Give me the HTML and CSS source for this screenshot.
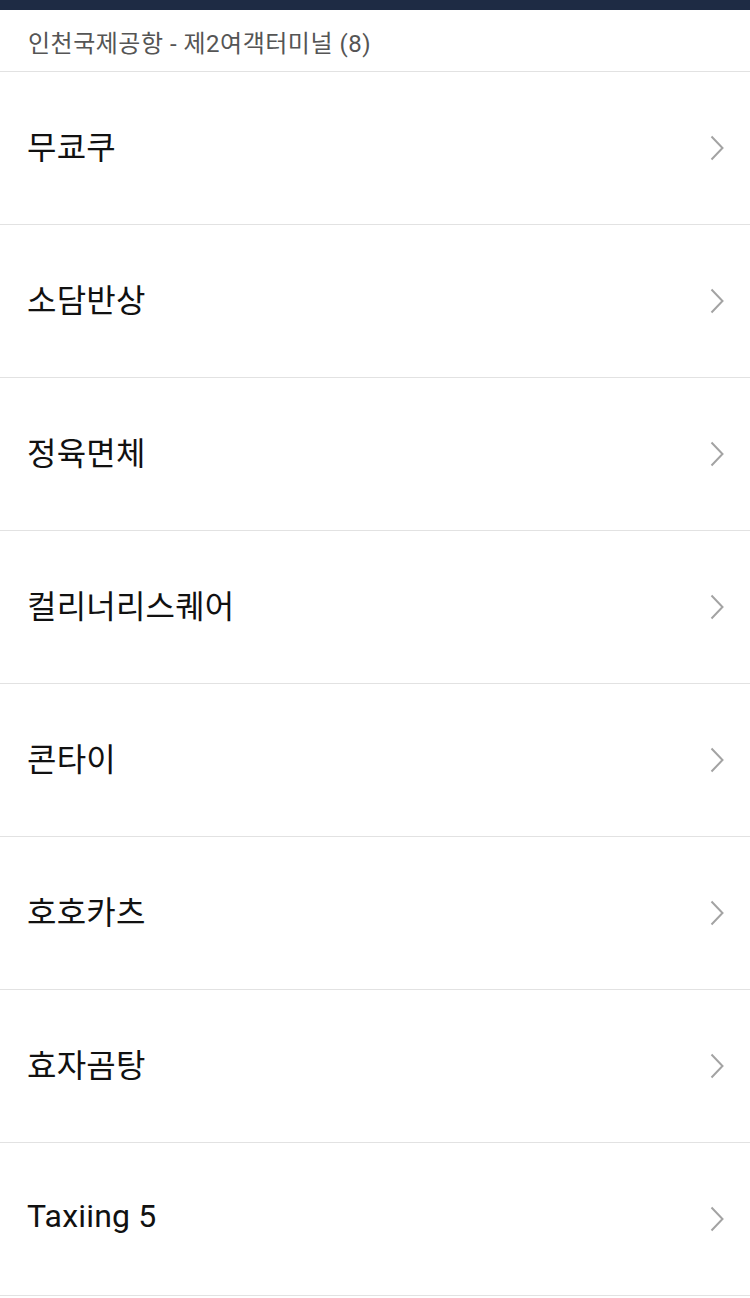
FILE: index.html
```html
<!DOCTYPE html>
<html lang="ko">
<head>
<meta charset="utf-8">
<link rel="stylesheet" href="styles.css">
</head>
<body>
<div class="topbar"></div>
<div class="header">인천국제공항 - 제2여객터미널 (8)</div>
<ul class="list">
  <li class="item"><span class="name">무쿄쿠</span><svg class="chev" viewBox="0 0 14 26"><path d="M1.5 1.5 L12.5 13 L1.5 24.5"/></svg></li>
  <li class="item"><span class="name">소담반상</span><svg class="chev" viewBox="0 0 14 26"><path d="M1.5 1.5 L12.5 13 L1.5 24.5"/></svg></li>
  <li class="item"><span class="name">정육면체</span><svg class="chev" viewBox="0 0 14 26"><path d="M1.5 1.5 L12.5 13 L1.5 24.5"/></svg></li>
  <li class="item"><span class="name">컬리너리스퀘어</span><svg class="chev" viewBox="0 0 14 26"><path d="M1.5 1.5 L12.5 13 L1.5 24.5"/></svg></li>
  <li class="item"><span class="name">콘타이</span><svg class="chev" viewBox="0 0 14 26"><path d="M1.5 1.5 L12.5 13 L1.5 24.5"/></svg></li>
  <li class="item"><span class="name">호호카츠</span><svg class="chev" viewBox="0 0 14 26"><path d="M1.5 1.5 L12.5 13 L1.5 24.5"/></svg></li>
  <li class="item"><span class="name">효자곰탕</span><svg class="chev" viewBox="0 0 14 26"><path d="M1.5 1.5 L12.5 13 L1.5 24.5"/></svg></li>
  <li class="item"><span class="name">Taxiing 5</span><svg class="chev" viewBox="0 0 14 26"><path d="M1.5 1.5 L12.5 13 L1.5 24.5"/></svg></li>
</ul>
</body>
</html>
```

FILE: styles.css
```css
html, body {
  margin: 0;
  padding: 0;
  background: #ffffff;
}
body {
  font-family: Roboto, "Noto Sans CJK KR", sans-serif;
  width: 750px;
}
.topbar {
  height: 10px;
  background: #1e2b44;
}
.header {
  height: 62px;
  box-sizing: border-box;
  border-bottom: 1px solid #e2e2e2;
  display: flex;
  align-items: center;
  padding: 2px 0 0 28px;
  font-size: 24px;
  letter-spacing: 0.5px;
  color: #555555;
}
.list {
  list-style: none;
  margin: 0;
  padding: 0;
}
.item {
  height: 153px;
  box-sizing: border-box;
  border-bottom: 1px solid #e2e2e2;
  display: flex;
  align-items: center;
  justify-content: space-between;
  padding: 0 26px 0 27px;
}
.name {
  font-size: 32px;
  letter-spacing: 0.2px;
  color: #111111;
  margin-bottom: 6px;
}
.chev {
  width: 14px;
  height: 26px;
  fill: none;
  stroke: #a3a3a3;
  stroke-width: 2;
}
```
